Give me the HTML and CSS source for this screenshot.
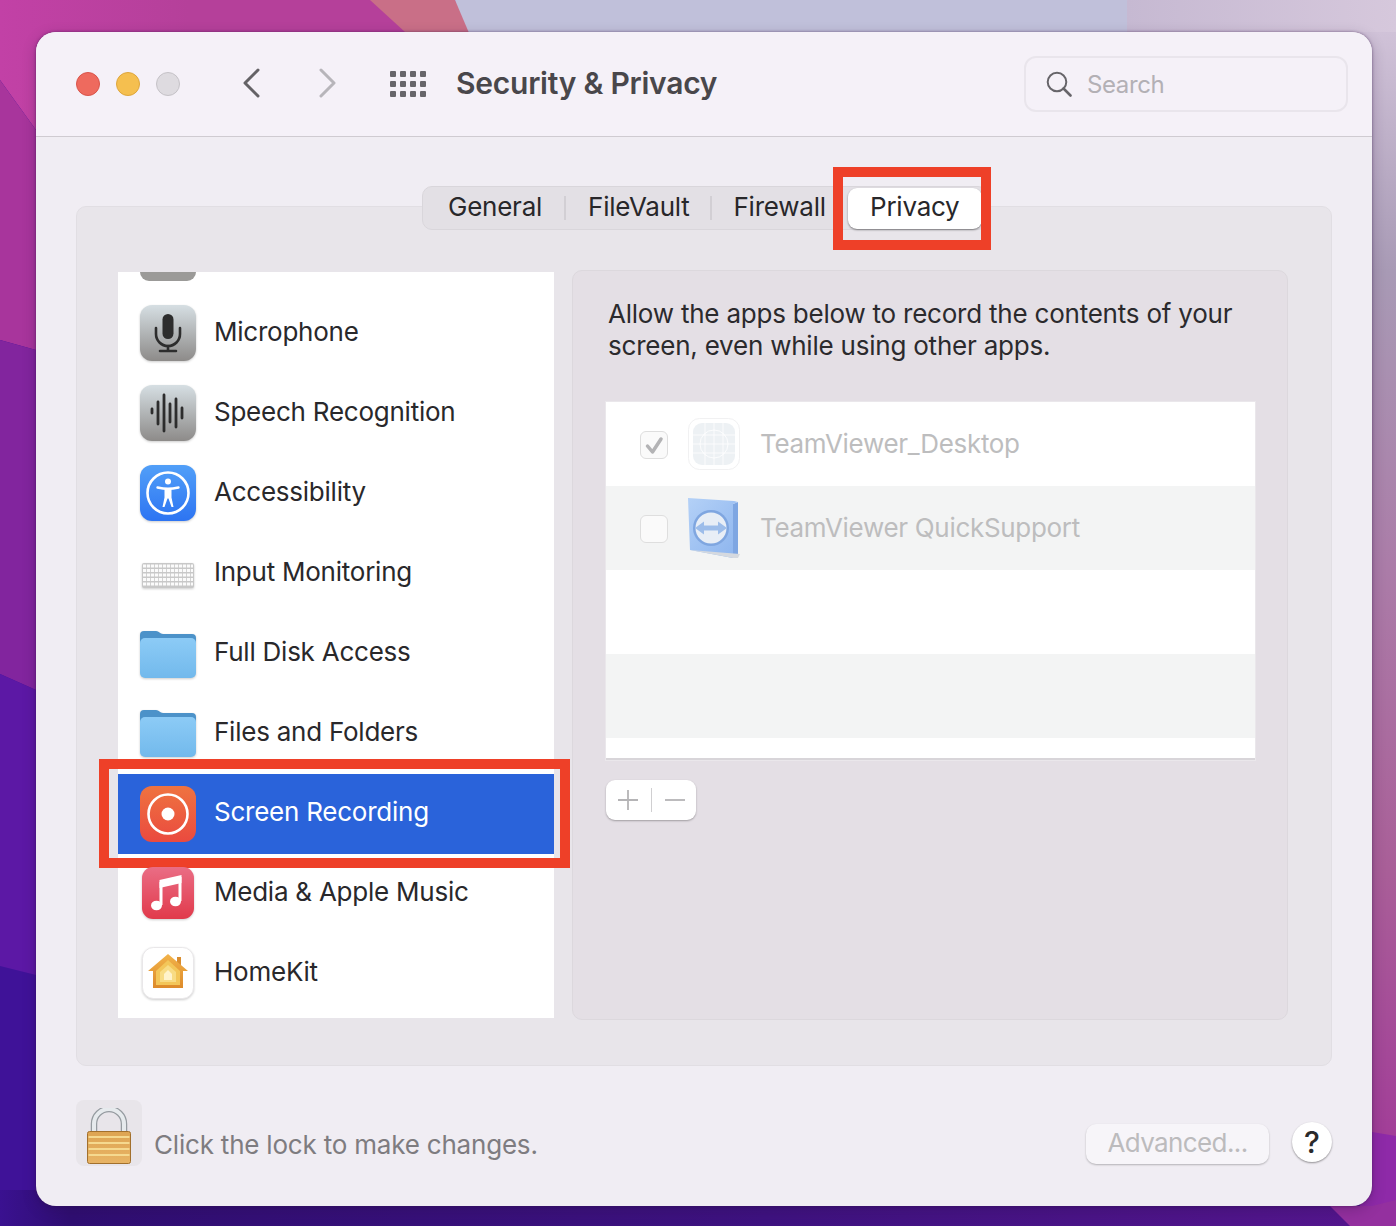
FILE: index.html
```html
<!DOCTYPE html>
<html lang="en">
<head>
<meta charset="utf-8">
<title>Security &amp; Privacy</title>
<link rel="stylesheet" href="styles.css">
</head>
<body>
<svg class="wallpaper" viewBox="0 0 1396 1226" preserveAspectRatio="none" aria-hidden="true">
  <defs>
    <linearGradient id="wpTop" x1="0" y1="0" x2="1" y2="0">
      <stop offset="0" stop-color="#c241a6"/><stop offset=".27" stop-color="#b5409a"/>
    </linearGradient>
    <linearGradient id="wpTopRight" x1="0" y1="0" x2="1" y2="0">
      <stop offset="0" stop-color="#c6b9d2"/><stop offset="1" stop-color="#d6c8dc"/>
    </linearGradient>
    <linearGradient id="wpRight" x1="0" y1="0" x2="0" y2="1">
      <stop offset="0" stop-color="#d0c2d8"/><stop offset=".2" stop-color="#a89ab5"/><stop offset=".45" stop-color="#ab7ca8"/><stop offset=".7" stop-color="#a95f98"/><stop offset=".92" stop-color="#a23f98"/><stop offset="1" stop-color="#9a3398"/>
    </linearGradient>
    <linearGradient id="wpBottom" x1="0" y1="0" x2="1" y2="0">
      <stop offset="0" stop-color="#3a1190"/><stop offset=".05" stop-color="#2f0e72"/><stop offset=".55" stop-color="#3e1280"/><stop offset="1" stop-color="#55168e"/>
    </linearGradient>
  </defs>
  <rect width="1396" height="1226" fill="#3f1298"/>
  <polygon points="0,0 700,0 700,40 60,40 36,130 0,80" fill="url(#wpTop)"/>
  <polygon points="0,80 36,130 36,350 0,340" fill="#a8359c"/>
  <polygon points="0,340 36,350 36,690 0,674" fill="#82259e"/>
  <polygon points="0,674 36,690 36,975 0,966" fill="#5c18a5"/>
  <rect x="0" y="1190" width="1396" height="36" fill="url(#wpBottom)"/>
  <polygon points="370,0 455,0 472,32 405,32" fill="#c96f87"/>
  <polygon points="455,0 1127,0 1127,40 472,40" fill="#c0c0da"/>
  <rect x="1127" y="0" width="269" height="40" fill="url(#wpTopRight)"/>
  <rect x="1360" y="32" width="36" height="1194" fill="url(#wpRight)"/>
  <polygon points="1360,1130 1396,1136 1396,1226 1360,1226" fill="#8e2aa8"/>
  <polygon points="1330,1206 1372,1206 1396,1200 1396,1226 1350,1226" fill="#94309f"/>
</svg>

<main class="window">
  <header class="toolbar">
    <div class="lights">
      <span class="light light-red"></span>
      <span class="light light-yellow"></span>
      <span class="light light-gray"></span>
    </div>
    <div class="nav">
      <svg class="chev" viewBox="0 0 20 30"><path d="M16 2 3 15l13 13" fill="none" stroke="#646266" stroke-width="3" stroke-linecap="round" stroke-linejoin="round"/></svg>
      <svg class="chev" viewBox="0 0 20 30"><path d="M4 2l13 13L4 28" fill="none" stroke="#b7b5ba" stroke-width="3" stroke-linecap="round" stroke-linejoin="round"/></svg>
    </div>
    <svg class="grid-icon" viewBox="0 0 36 26" fill="#67656a">
      <rect x="0" y="0" width="6" height="6" rx="1"/><rect x="10" y="0" width="6" height="6" rx="1"/><rect x="20" y="0" width="6" height="6" rx="1"/><rect x="30" y="0" width="6" height="6" rx="1"/>
      <rect x="0" y="10" width="6" height="6" rx="1"/><rect x="10" y="10" width="6" height="6" rx="1"/><rect x="20" y="10" width="6" height="6" rx="1"/><rect x="30" y="10" width="6" height="6" rx="1"/>
      <rect x="0" y="20" width="6" height="6" rx="1"/><rect x="10" y="20" width="6" height="6" rx="1"/><rect x="20" y="20" width="6" height="6" rx="1"/><rect x="30" y="20" width="6" height="6" rx="1"/>
    </svg>
    <h1 class="title">Security &amp; Privacy</h1>
    <div class="search">
      <svg class="search-icon" viewBox="0 0 26 26"><circle cx="11" cy="11" r="9.3" fill="none" stroke="#67656a" stroke-width="2"/><path d="M17.5 17.5l7 7" stroke="#67656a" stroke-width="2.6" stroke-linecap="round"/></svg>
      <span class="search-text">Search</span>
    </div>
  </header>

  <div class="body">
    <section class="panel">
      <nav class="tabs">
        <span class="tab tab-general">General</span>
        <span class="tab-sep"></span>
        <span class="tab tab-filevault">FileVault</span>
        <span class="tab-sep tab-sep-b"></span>
        <span class="tab tab-firewall">Firewall</span>
        <span class="tab tab-active">Privacy</span>
        <span class="mark mark-tab"></span>
      </nav>

      <div class="panel-main">
        <div class="list-wrap">
          <ul class="list">
            <li class="cut-icon"><span class="icon-cut"></span></li>
            <li class="row">
              <svg class="icon" viewBox="0 0 56 56"><defs><linearGradient id="grayTile" x1="0" y1="0" x2="0" y2="1"><stop offset="0" stop-color="#d6dfe3"/><stop offset="1" stop-color="#8d8b89"/></linearGradient></defs><rect width="56" height="56" rx="12" fill="url(#grayTile)"/><rect x="22.500" y="9" width="11" height="25" rx="5.500" fill="#2d2d2d"/><path d="M16 23v6a12 12 0 0 0 24 0v-6" fill="none" stroke="#2d2d2d" stroke-width="2.600" stroke-linecap="round"/><path d="M28 41v5M20 46h16" stroke="#2d2d2d" stroke-width="2.600" stroke-linecap="round"/></svg>
              <span class="label">Microphone</span>
            </li>
            <li class="row">
              <svg class="icon" viewBox="0 0 56 56"><rect width="56" height="56" rx="12" fill="url(#grayTile)"/><g stroke="#2d2d2d" stroke-width="2.800" stroke-linecap="round"><path d="M12 24v4M18 17v22M24 10v36M30 19v18M36 14v28M42 23v10"/></g></svg>
              <span class="label">Speech Recognition</span>
            </li>
            <li class="row">
              <svg class="icon" viewBox="0 0 56 56"><defs><linearGradient id="blueTile" x1="0" y1="0" x2="0" y2="1"><stop offset="0" stop-color="#519ff8"/><stop offset="1" stop-color="#2d74f2"/></linearGradient></defs><rect width="56" height="56" rx="12" fill="url(#blueTile)"/><circle cx="28" cy="28" r="20.500" fill="none" stroke="#fff" stroke-width="2.600"/><circle cx="28" cy="16.500" r="3" fill="#fff"/><path d="M17.500 22.500c4 .8 7 1.200 10.500 1.200s6.500-.4 10.500-1.200" fill="none" stroke="#fff" stroke-width="2.400" stroke-linecap="round"/><path d="M24.500 23.500h7v9l2 9.500h-2l-3-8.500h-1l-3 8.500h-2l2-9.500z" fill="#fff"/></svg>
              <span class="label">Accessibility</span>
            </li>
            <li class="row">
              <svg class="icon" viewBox="0 0 56 56"><rect x="2" y="18" width="52" height="25" rx="2" fill="#c8c8c8"/><g stroke="#fbfbfb" stroke-width="3.200" stroke-dasharray="3.200 .8"><path d="M3 21h50M3 25.500h50M3 30h50M3 34.500h50M3 39h50"/></g></svg>
              <span class="label">Input Monitoring</span>
            </li>
            <li class="row">
              <svg class="icon" viewBox="0 0 56 56"><defs><linearGradient id="folderFront" x1="0" y1="0" x2="0" y2="1"><stop offset="0" stop-color="#8ccbf6"/><stop offset="1" stop-color="#72b9ec"/></linearGradient></defs><path d="M0 10a4 4 0 0 1 4-4h12c3 0 4 3 7 3h29a4 4 0 0 1 4 4v12H0z" fill="#4c92c9"/><rect y="13" width="56" height="40" rx="5" fill="url(#folderFront)"/></svg>
              <span class="label">Full Disk Access</span>
            </li>
            <li class="row">
              <svg class="icon" viewBox="0 0 56 56"><path d="M0 9a4 4 0 0 1 4-4h12c3 0 4 3 7 3h29a4 4 0 0 1 4 4v12H0z" fill="#4c92c9"/><rect y="12" width="56" height="40" rx="5" fill="url(#folderFront)"/></svg>
              <span class="label">Files and Folders</span>
            </li>
            <li class="row row-selected">
              <svg class="icon" viewBox="0 0 56 56"><defs><linearGradient id="redTile" x1="0" y1="0" x2="0" y2="1"><stop offset="0" stop-color="#ef7340"/><stop offset="1" stop-color="#ea4a3f"/></linearGradient></defs><rect width="56" height="56" rx="12" fill="url(#redTile)"/><circle cx="28" cy="28" r="19.500" fill="none" stroke="#fff" stroke-width="2.600"/><circle cx="28" cy="28" r="6.500" fill="#fff"/></svg>
              <span class="label">Screen Recording</span>
              <span class="mark mark-row"></span>
            </li>
            <li class="row">
              <svg class="icon icon-small" viewBox="0 0 52 52"><defs><linearGradient id="musicTile" x1="0" y1="0" x2="0" y2="1"><stop offset="0" stop-color="#ea6d85"/><stop offset="1" stop-color="#e13a4b"/></linearGradient></defs><rect width="52" height="52" rx="11" fill="url(#musicTile)"/><path d="M19 38V15M38 34V10" fill="none" stroke="#fff" stroke-width="3"/><path d="M17.500 13l22-5v8l-22 5z" fill="#fff"/><ellipse cx="14.500" cy="38.500" rx="5.500" ry="4.800" fill="#fff"/><ellipse cx="33.500" cy="34.500" rx="5.500" ry="4.800" fill="#fff"/></svg>
              <span class="label">Media &amp; Apple Music</span>
            </li>
            <li class="row">
              <svg class="icon icon-small" viewBox="0 0 52 52"><defs><linearGradient id="houseFill" x1="0" y1="0" x2="0" y2="1"><stop offset="0" stop-color="#f2b34a"/><stop offset="1" stop-color="#dd8a2a"/></linearGradient></defs><rect x=".5" y=".5" width="51" height="51" rx="11" fill="#fff" stroke="#e9e7e9"/><path d="M35 10h4v8h-4z" fill="#d98d2f"/><path d="M26 7 6 24h5v17h30V24h5z" fill="url(#houseFill)"/><path d="M26 13 14 24v14h24V24z" fill="#f3c659"/><path d="M26 18l-8 7v10h16V25z" fill="#f8dc85"/><path d="M26 23l-4 4v6h8v-6z" fill="#fff3cb"/></svg>
              <span class="label">HomeKit</span>
            </li>
          </ul>
        </div>

        <div class="detail">
          <p class="detail-text">Allow the apps below to record the contents of your screen, even while using other apps.</p>
          <div class="apps">
            <div class="app">
              <span class="check check-on"><svg viewBox="0 0 26 26"><path d="M6.500 14l5 6 8.500-13" fill="none" stroke="#b3b3b5" stroke-width="3.500" stroke-linecap="round" stroke-linejoin="round"/></svg></span>
              <svg class="app-icon" viewBox="0 0 52 52"><rect x=".5" y=".5" width="51" height="51" rx="11" fill="#fff" stroke="#f1f1f2"/><rect x="5" y="5" width="42" height="42" rx="9" fill="#edf1f4"/><g stroke="#fff" stroke-width=".8" fill="none"><path d="M5 17h42M5 26h42M5 35h42M17 5v42M26 5v42M35 5v42"/><circle cx="26" cy="26" r="14"/></g></svg>
              <span class="app-name">TeamViewer_Desktop</span>
            </div>
            <div class="app app-alt">
              <span class="check"></span>
              <svg class="app-icon" viewBox="0 0 52 52"><defs><linearGradient id="tvBlue" x1="0" y1="0" x2="1" y2="1"><stop offset="0" stop-color="#b4d1f7"/><stop offset="1" stop-color="#8cb4ee"/></linearGradient></defs><path d="M45 2l5-2v56l-5 0z" fill="#7ea6e2"/><path d="M0-4l46 3 4 1-5 2v54L2 48z" fill="url(#tvBlue)"/><path d="M2 48l43 8 5 0 2-4z" fill="#d5d9df"/><circle cx="23" cy="26" r="18" fill="#7fa6e0"/><circle cx="23" cy="26" r="15.500" fill="#e8eef6"/><path d="M7 26l9-6.500v4h14v-4l9 6.500-9 6.500v-4H16v4z" fill="#9dbdea"/></svg>
              <span class="app-name">TeamViewer QuickSupport</span>
            </div>
            <div class="app"></div>
            <div class="app app-alt"></div>
          </div>
          <div class="add-remove">
            <svg class="pm" viewBox="0 0 20 20"><path d="M10 0v20M0 10h20" stroke="#b5b4b6" stroke-width="1.800"/></svg>
            <span class="pm-sep"></span>
            <svg class="pm" viewBox="0 0 20 20"><path d="M0 10h20" stroke="#b5b4b6" stroke-width="1.800"/></svg>
          </div>
        </div>
      </div>
    </section>

    <footer class="footer">
      <span class="lock-box">
        <svg class="lock" viewBox="0 0 44 56"><defs><linearGradient id="lockBody" x1="0" y1="0" x2="0" y2="1"><stop offset="0" stop-color="#dda452"/><stop offset="1" stop-color="#e8b465"/></linearGradient></defs><path d="M7 24V16a15 15 0 0 1 30 0v8" fill="none" stroke="#959ba0" stroke-width="6.500"/><path d="M7 24V16a15 15 0 0 1 30 0v8" fill="none" stroke="#e6eaed" stroke-width="4"/><rect x=".5" y="23.500" width="43" height="32" rx="2" fill="url(#lockBody)" stroke="#a2702c"/><g stroke="#f5d98f" stroke-width="2"><path d="M1.500 29h41M1.500 35h41M1.500 41h41M1.500 47h41"/></g></svg>
      </span>
      <span class="lock-text">Click the lock to make changes.</span>
      <span class="advanced">Advanced...</span>
      <span class="help">?</span>
    </footer>
  </div>
</main>
</body>
</html>
```

FILE: styles.css
```css
* { box-sizing: border-box; }

html, body { margin: 0; padding: 0; }

body {
  width: 1396px;
  height: 1226px;
  overflow: hidden;
  padding: 32px 24px 20px 36px;
  font-family: Inter, "Liberation Sans", sans-serif;
  color: #29282b;
}

.wallpaper {
  position: absolute;
  left: 0;
  top: 0;
  width: 1396px;
  height: 1226px;
  z-index: 0;
}

.window {
  position: relative;
  z-index: 1;
  width: 1336px;
  height: 1174px;
  border-radius: 20px;
  background: #f0edf3;
  box-shadow: 0 0 3px rgba(50, 20, 70, .55), 0 4px 14px rgba(40, 10, 60, .25);
  display: flex;
  flex-direction: column;
  overflow: hidden;
}

/* toolbar */
.toolbar {
  height: 105px;
  flex: none;
  background: #f5f1f8;
  border-bottom: 1px solid #cfcbd1;
  display: flex;
  align-items: center;
  padding: 0 24px 1px 40px;
}

.lights { display: flex; gap: 16px; width: 164px; flex: none; }

.light {
  width: 24px;
  height: 24px;
  border-radius: 50%;
  border: 1px solid transparent;
}
.light-red { background: #ee6a5e; border-color: #d9544a; }
.light-yellow { background: #f5bf4f; border-color: #dea63c; }
.light-gray { background: #dedbe0; border-color: #c5c2c7; }

.nav { display: flex; gap: 55px; width: 150px; flex: none; padding-left: 2px; margin-bottom: 1px; }
.chev { width: 20px; height: 30px; display: block; }

.grid-icon { width: 36px; height: 26px; flex: none; }

.title {
  margin: 0 0 2px 30px;
  font-size: 30px;
  font-weight: 600;
  letter-spacing: -.24px;
  color: #49474b;
  flex: 1;
}

.search {
  width: 324px;
  height: 56px;
  flex: none;
  border: 2px solid #e9e5ec;
  border-radius: 12px;
  display: flex;
  align-items: center;
  padding: 0 0 0 20px;
  gap: 15px;
}
.search-icon { width: 26px; height: 26px; }
.search-text { font-size: 24px; letter-spacing: -.4px; color: #b3b0b5; padding-top: 2px; }

/* body */
.body {
  flex: 1;
  display: flex;
  flex-direction: column;
  padding: 69px 40px 0;
}

.panel {
  position: relative;
  height: 860px;
  flex: none;
  background: #e8e5ea;
  border: 1px solid #e1dee3;
  border-radius: 10px;
  padding: 65px 44px 0 41px;
}

.tabs {
  position: absolute;
  top: -21px;
  left: 345px;
  width: 566px;
  height: 44px;
  background: #e3e0e5;
  border: 1px solid #d9d6db;
  border-radius: 10px;
  display: flex;
  align-items: center;
  font-size: 26px;
  letter-spacing: -.24px;
  color: #28272a;
}

.tab { display: block; line-height: 38px; margin-bottom: 2px; }
.tab-general { margin-left: 25px; }
.tab-filevault { margin-left: 22px; }
.tab-firewall { margin-left: 22px; }
.tab-sep { width: 2px; height: 24px; background: #d2cfd4; margin-left: 22px; }
.tab-sep-b { margin-left: 20px; }

.tab-active {
  margin: 0 0 0 22px;
  width: 134px;
  height: 41px;
  background: #fff;
  border-radius: 9px;
  text-align: center;
  box-shadow: 0 1px 2px rgba(0, 0, 0, .45);
}

.mark {
  position: absolute;
  border: 10px solid #ee4028;
  pointer-events: none;
}
.mark-tab { left: 410px; top: -20px; width: 158px; height: 83px; }
.mark-row { left: -19px; top: -15px; width: 471px; height: 109px; }

.panel-main { display: flex; gap: 18px; align-items: flex-start; }

/* list */
.list-wrap {
  width: 436px;
  height: 746px;
  flex: none;
  background: #fff;
}

.list { list-style: none; margin: 0; padding: 0; }

.cut-icon { height: 22px; padding-left: 22px; overflow: hidden; }
.icon-cut {
  display: block;
  width: 56px;
  height: 9px;
  background: #9b9a98;
  border-radius: 0 0 12px 12px;
}

.row {
  position: relative;
  height: 80px;
  display: flex;
  align-items: center;
  padding-left: 22px;
  font-size: 26px;
  letter-spacing: -.24px;
  color: #29282b;
}

.icon { width: 56px; height: 56px; flex: none; margin-bottom: 2px; filter: drop-shadow(0 1px 1px rgba(0, 0, 0, .2)); }
.icon-small { width: 52px; height: 52px; margin: 0 2px 2px; }
.label { margin-left: 18px; margin-bottom: 6px; white-space: nowrap; }

.row-selected { background: #2a63da; color: #fff; }
.row-selected .icon { filter: none; margin-bottom: 0; }

/* detail */
.detail {
  width: 716px;
  height: 750px;
  flex: none;
  margin-top: -2px;
  background: #e4dfe5;
  border: 1px solid #dcd8dd;
  border-radius: 10px;
  padding: 27px 32px 0 32px;
}

.detail-text {
  margin: 0;
  padding: 0 3px;
  font-size: 26px;
  letter-spacing: -.22px;
  line-height: 32px;
  color: #2b2a2d;
}

.apps {
  margin: 40px 0 0 1px;
  height: 358px;
  background: #fff;
  border: 1px solid #d8d5d9;
  border-width: 0 0 2px 0;
  box-shadow: 0 0 0 1px #eae7eb;
}

.app {
  height: 84px;
  display: flex;
  align-items: center;
  padding-left: 34px;
}
.app-alt { background: #f3f4f4; }

.check {
  width: 28px;
  height: 28px;
  flex: none;
  border: 1px solid #dedede;
  border-radius: 6px;
  background: #fafafa;
  margin: 2px 20px 0 0;
}
.check svg { display: block; width: 26px; height: 26px; }

.app-icon { width: 52px; height: 52px; flex: none; overflow: visible; }
.app-name { margin: 0 0 2px 20px; font-size: 26px; letter-spacing: -.31px; color: #bdbdbe; white-space: nowrap; }

.add-remove {
  margin: 20px 0 0 1px;
  width: 90px;
  height: 40px;
  background: #fff;
  border-radius: 9px;
  box-shadow: 0 1px 2px rgba(0, 0, 0, .3);
  display: flex;
  align-items: center;
  padding-left: 12px;
  gap: 13px;
}
.pm { width: 20px; height: 20px; }
.pm-sep { width: 1px; height: 24px; background: #d0cfd1; }

/* footer */
.footer {
  flex: 1;
  display: flex;
  align-items: flex-start;
  padding-top: 34px;
}

.lock-box {
  width: 66px;
  height: 66px;
  flex: none;
  background: #e8e5ea;
  border-radius: 8px;
  display: flex;
  align-items: flex-end;
  justify-content: center;
  padding-bottom: 2px;
}
.lock { width: 44px; height: 56px; }

.lock-text {
  margin: 28px 0 0 12px;
  font-size: 26px;
  letter-spacing: -.2px;
  color: #7e7c80;
  flex: 1;
  line-height: 34px;
}

.advanced {
  margin-top: 24px;
  width: 183px;
  height: 40px;
  background: #f7f5f9;
  border-radius: 10px;
  box-shadow: 0 1px 2px rgba(0, 0, 0, .25);
  font-size: 26px;
  letter-spacing: -.6px;
  line-height: 38px;
  text-align: center;
  color: #bcbbbd;
}

.help {
  margin: 22px 0 0 23px;
  width: 40px;
  height: 40px;
  border-radius: 50%;
  background: #fff;
  box-shadow: 0 1px 2px rgba(0, 0, 0, .4);
  font-size: 30px;
  font-weight: 500;
  line-height: 40px;
  text-align: center;
  color: #2a2a2c;
}
```
